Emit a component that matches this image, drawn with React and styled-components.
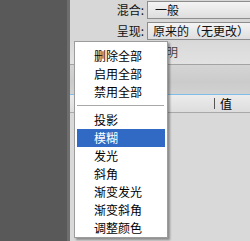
import React from "react";
import styled, { createGlobalStyle } from "styled-components";

const GlobalStyle = createGlobalStyle`
  html, body {
    margin: 0;
    padding: 0;
    background: #595959;
  }
  body {
    font-family: "Noto Sans CJK SC", "DejaVu Sans", sans-serif;
    font-size: 12px;
    color: #000;
  }
`;

const Page = styled.div`
  position: relative;
  width: 250px;
  height: 241px;
  display: flex;
  overflow: hidden;
`;

const DarkSide = styled.div`
  width: 67px;
  background: #595959;
  border-right: 3px solid #6e6e6e;
`;

const Panel = styled.div`
  flex: 1;
  background: #d7d7d7;
  display: flex;
  flex-direction: column;
  padding-top: 1px;
`;

const Fields = styled.div`
  display: flex;
  flex-direction: column;
  gap: 3px;
`;

const FieldRow = styled.div`
  display: grid;
  grid-template-columns: 74px 1fr;
  column-gap: 3px;
  align-items: center;
  height: 18px;
`;

const Label = styled.div`
  text-align: right;
  font-size: 12px;
  line-height: 18px;
  white-space: nowrap;
  color: #111;
`;

const Select = styled.div`
  height: 16px;
  border: 1px solid #8d8d8d;
  border-right: none;
  background: linear-gradient(#f4f4f4, #dedede);
  padding-left: ${(p) => p.$indent}px;
  font-size: 12px;
  line-height: 16px;
  white-space: nowrap;
  overflow: hidden;
  color: #111;
`;

const TableHead = styled.div`
  margin-top: 2px;
  height: 22px;
  background: linear-gradient(#d9d9d9, #e2e2e2);
  border-bottom: 1px solid #a3a3a3;
  padding-left: 84px;
  font-size: 12px;
  line-height: 20px;
  color: #444;
`;

const Band = styled.div`
  height: 29px;
  background: linear-gradient(#d4d4d4, #cbcbcb 60%, #d2d2d2);
  border-bottom: 1px solid #7fbde6;
`;

const ColumnHead = styled.div`
  height: 17px;
  background: linear-gradient(#ececec, #dddddd);
  border-bottom: 1px solid #a9a9a9;
  padding-left: 144px;
  display: flex;
  align-items: center;
  gap: 5px;
  font-size: 12px;
  line-height: 17px;
`;

const Divider = styled.span`
  width: 1px;
  height: 11px;
  background: #555;
`;

const Rest = styled.div`
  flex: 1;
  background: #d9d9d9;
`;

const Menu = styled.div`
  position: absolute;
  left: 74px;
  top: 41px;
  width: 88px;
  border: 1px solid #9c9c9c;
  background: #fff;
  padding: 5px 2px 0 2px;
  box-shadow: 2px 2px 2px rgba(0, 0, 0, 0.35);
`;

const Item = styled.div`
  height: 18px;
  line-height: 18px;
  padding-left: 17px;
  font-size: 12px;
  white-space: nowrap;
  background: ${(p) => (p.$active ? "#316ac5" : "transparent")};
  color: ${(p) => (p.$active ? "#fff" : "#000")};
`;

const Separator = styled.div`
  margin: 4px 1px 4px 0;
  border-top: 1px solid #a8a8a8;
  border-bottom: 1px solid #fff;
`;

const topItems = ["删除全部", "启用全部", "禁用全部"];
const effectItems = ["投影", "模糊", "发光", "斜角", "渐变发光", "渐变斜角", "调整颜色"];

export default function App() {
  return (
    <>
      <GlobalStyle />
      <Page>
        <DarkSide />
        <Panel>
          <Fields>
            <FieldRow>
              <Label>混合:</Label>
              <Select $indent={7}>一般</Select>
            </FieldRow>
            <FieldRow>
              <Label>呈现:</Label>
              <Select $indent={5}>原来的（无更改）</Select>
            </FieldRow>
          </Fields>
          <TableHead>说明</TableHead>
          <Band />
          <ColumnHead>
            <Divider />
            值
          </ColumnHead>
          <Rest />
        </Panel>
        <Menu>
          {topItems.map((t) => (
            <Item key={t}>{t}</Item>
          ))}
          <Separator />
          {effectItems.map((t) => (
            <Item key={t} $active={t === "模糊"}>
              {t}
            </Item>
          ))}
        </Menu>
      </Page>
    </>
  );
}
